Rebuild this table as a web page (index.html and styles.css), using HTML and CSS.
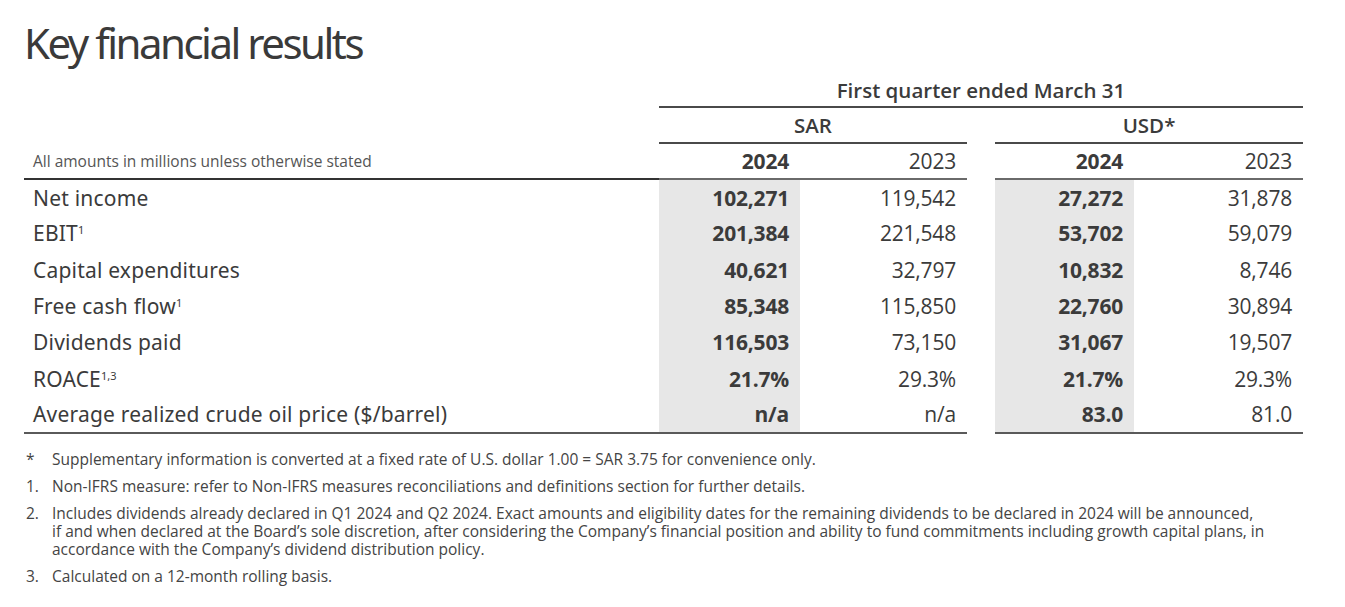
FILE: index.html
```html
<!DOCTYPE html>
<html lang="en">
<head>
<meta charset="utf-8">
<title>Key financial results</title>
<link rel="stylesheet" href="styles.css">
</head>
<body>
<main class="page">
  <h1 class="title">Key financial results</h1>
  <table class="results">
    <colgroup>
      <col class="c-label">
      <col class="c-sar24">
      <col class="c-sar23">
      <col class="c-gap">
      <col class="c-usd24">
      <col class="c-usd23">
    </colgroup>
    <thead>
      <tr class="h-row">
        <th class="blank"></th>
        <th class="period" colspan="5">First quarter ended March 31</th>
      </tr>
      <tr class="h-row">
        <th class="blank"></th>
        <th class="currency" colspan="2">SAR</th>
        <th class="gap"></th>
        <th class="currency" colspan="2">USD*</th>
      </tr>
      <tr class="h-row">
        <th class="note">All amounts in millions unless otherwise stated</th>
        <th class="year cur">2024</th>
        <th class="year">2023</th>
        <th class="gap"></th>
        <th class="year cur">2024</th>
        <th class="year">2023</th>
      </tr>
    </thead>
    <tbody>
      <tr>
        <td class="label">Net income</td>
        <td class="num cur">102,271</td><td class="num">119,542</td><td class="gap"></td>
        <td class="num cur">27,272</td><td class="num">31,878</td>
      </tr>
      <tr>
        <td class="label">EBIT<sup>1</sup></td>
        <td class="num cur">201,384</td><td class="num">221,548</td><td class="gap"></td>
        <td class="num cur">53,702</td><td class="num">59,079</td>
      </tr>
      <tr>
        <td class="label">Capital expenditures</td>
        <td class="num cur">40,621</td><td class="num">32,797</td><td class="gap"></td>
        <td class="num cur">10,832</td><td class="num">8,746</td>
      </tr>
      <tr>
        <td class="label">Free cash flow<sup>1</sup></td>
        <td class="num cur">85,348</td><td class="num">115,850</td><td class="gap"></td>
        <td class="num cur">22,760</td><td class="num">30,894</td>
      </tr>
      <tr>
        <td class="label">Dividends paid</td>
        <td class="num cur">116,503</td><td class="num">73,150</td><td class="gap"></td>
        <td class="num cur">31,067</td><td class="num">19,507</td>
      </tr>
      <tr>
        <td class="label">ROACE<sup>1,3</sup></td>
        <td class="num cur">21.7%</td><td class="num">29.3%</td><td class="gap"></td>
        <td class="num cur">21.7%</td><td class="num">29.3%</td>
      </tr>
      <tr class="last">
        <td class="label">Average realized crude oil price ($/barrel)</td>
        <td class="num cur">n/a</td><td class="num">n/a</td><td class="gap"></td>
        <td class="num cur">83.0</td><td class="num">81.0</td>
      </tr>
    </tbody>
  </table>
  <ol class="notes">
    <li><span class="mark">*</span><span class="text">Supplementary information is converted at a fixed rate of U.S. dollar 1.00 = SAR 3.75 for convenience only.</span></li>
    <li><span class="mark">1.</span><span class="text">Non-IFRS measure: refer to Non-IFRS measures reconciliations and definitions section for further details.</span></li>
    <li><span class="mark">2.</span><span class="text">Includes dividends already declared in Q1 2024 and Q2 2024. Exact amounts and eligibility dates for the remaining dividends to be declared in 2024 will be announced,<br>if and when declared at the Board’s sole discretion, after considering the Company’s financial position and ability to fund commitments including growth capital plans, in<br>accordance with the Company’s dividend distribution policy.</span></li>
    <li><span class="mark">3.</span><span class="text">Calculated on a 12-month rolling basis.</span></li>
  </ol>
</main>
</body>
</html>
```

FILE: styles.css
```css
* { box-sizing: border-box; }

html, body {
  margin: 0;
  padding: 0;
  background: #ffffff;
}

body {
  font-family: "Open Sans", "Noto Sans", sans-serif;
  color: #3b3b3b;
}

.page {
  padding: 18px 0 0 24px;
}

.title {
  margin: 0;
  font-family: "Noto Sans", "Open Sans", sans-serif;
  font-weight: 400;
  font-size: 42px;
  line-height: 50px;
  letter-spacing: -2.5px;
  color: #3a3a3a;
}

.results {
  margin-top: 3px;
  width: 1279px;
  table-layout: fixed;
  border-collapse: collapse;
}

.c-label { width: 635px; }
.c-sar24 { width: 141px; }
.c-sar23 { width: 167px; }
.c-gap   { width: 28px; }
.c-usd24 { width: 139px; }
.c-usd23 { width: 169px; }

.results th,
.results td {
  padding: 0;
}

.h-row th {
  height: 36px;
  font-weight: 400;
  vertical-align: middle;
}

.period {
  font-weight: 600 !important;
  font-size: 20.5px;
  text-align: center;
  border-bottom: 2px solid #4a4a4a;
  padding-top: 2px !important;
}

.currency {
  font-weight: 600 !important;
  font-size: 20.5px;
  text-align: center;
  border-bottom: 2px solid #4a4a4a;
}

.note {
  text-align: left;
  font-size: 15.5px;
  color: #555555;
  padding-left: 9px !important;
  border-bottom: 2px solid #333333;
}

.year {
  text-align: right;
  font-size: 21px;
  padding-right: 11px !important;
  border-bottom: 2px solid #6a6a6a;
  letter-spacing: -0.2px;
}

.year.cur {
  font-weight: 700 !important;
}

.results tbody td {
  height: 36.3px;
  vertical-align: middle;
}

.label {
  font-family: "Noto Sans", "Open Sans", sans-serif;
  font-size: 21px;
  padding-left: 9px !important;
  letter-spacing: 0.2px;
  white-space: nowrap;
}

.label sup {
  font-size: 11px;
  vertical-align: 7px;
  line-height: 0;
  letter-spacing: 0;
}

.num {
  text-align: right;
  font-size: 21px;
  padding-right: 11px !important;
  letter-spacing: -0.2px;
}

.num.cur {
  font-weight: 700;
  background: #e7e7e7;
}

.last td {
  border-bottom: 2px solid #5a5a5a;
}

.last td.gap {
  border-bottom: none;
}

.notes {
  list-style: none;
  margin: 16px 0 0;
  padding: 0;
  font-size: 15.5px;
  line-height: 18px;
  color: #444444;
}

.notes li {
  display: flex;
  margin-bottom: 9px;
}

.mark {
  flex: 0 0 28px;
  padding-left: 2px;
}

.text {
  white-space: nowrap;
  letter-spacing: 0;
}
```
